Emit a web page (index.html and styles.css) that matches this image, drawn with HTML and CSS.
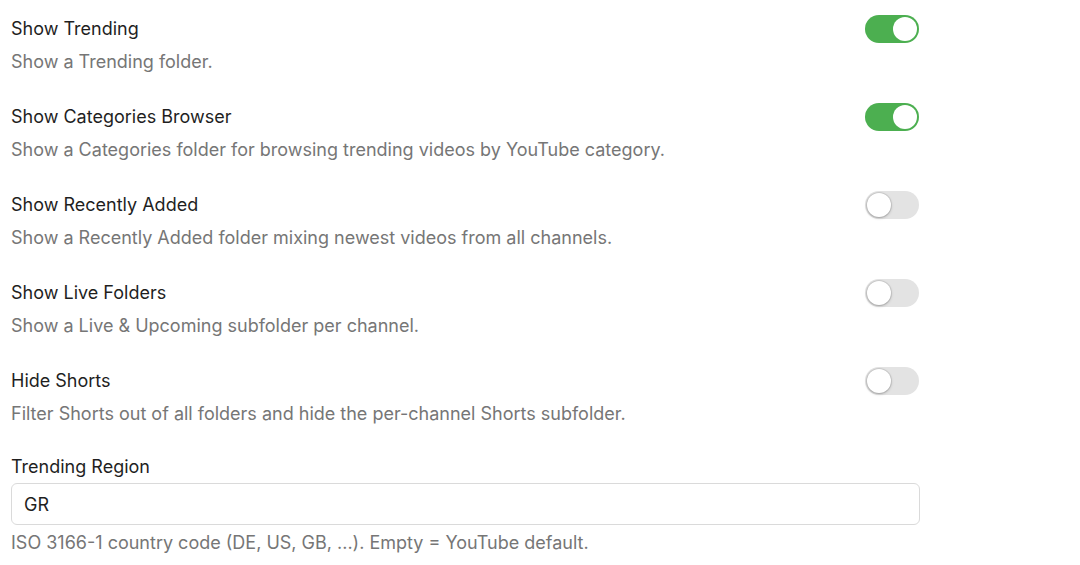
FILE: index.html
```html
<!DOCTYPE html>
<html lang="en">
<head>
  <meta charset="UTF-8" />
  <meta name="viewport" content="width=device-width, initial-scale=1" />
  <title>Settings</title>
  <link rel="stylesheet" href="styles.css">
</head>
<body>
  <div class="settings">
    <div class="setting">
      <div class="setting-head">
        <span class="setting-title">Show Trending</span>
        <label class="switch"><input type="checkbox" checked><span class="slider"></span></label>
      </div>
      <div class="setting-desc">Show a Trending folder.</div>
    </div>

    <div class="setting">
      <div class="setting-head">
        <span class="setting-title">Show Categories Browser</span>
        <label class="switch"><input type="checkbox" checked><span class="slider"></span></label>
      </div>
      <div class="setting-desc">Show a Categories folder for browsing trending videos by YouTube category.</div>
    </div>

    <div class="setting">
      <div class="setting-head">
        <span class="setting-title">Show Recently Added</span>
        <label class="switch"><input type="checkbox"><span class="slider"></span></label>
      </div>
      <div class="setting-desc">Show a Recently Added folder mixing newest videos from all channels.</div>
    </div>

    <div class="setting">
      <div class="setting-head">
        <span class="setting-title">Show Live Folders</span>
        <label class="switch"><input type="checkbox"><span class="slider"></span></label>
      </div>
      <div class="setting-desc">Show a Live &amp; Upcoming subfolder per channel.</div>
    </div>

    <div class="setting">
      <div class="setting-head">
        <span class="setting-title">Hide Shorts</span>
        <label class="switch"><input type="checkbox"><span class="slider"></span></label>
      </div>
      <div class="setting-desc">Filter Shorts out of all folders and hide the per-channel Shorts subfolder.</div>
    </div>

    <div class="field">
      <label class="field-label" for="region">Trending Region</label>
      <input class="text-input" type="text" id="region" value="GR" />
      <div class="setting-desc">ISO 3166-1 country code (DE, US, GB, ...). Empty = YouTube default.</div>
    </div>
  </div>
</body>
</html>
```

FILE: styles.css
```css
body {
  font-family: Inter, 'Noto Sans', sans-serif;
  background: #fff;
  color: #1f1f1f;
  margin: 0;
  padding: 0;
}
.settings {
  width: 909px;
  padding: 15px 0 0 11px;
}
.setting {
  margin-bottom: 29px;
}
.setting-head {
  display: flex;
  align-items: center;
  justify-content: space-between;
  height: 28px;
}
.setting-title,
.field-label {
  font-size: 18px;
  line-height: 24px;
  color: #1f1f1f;
}
.setting-desc {
  font-size: 18px;
  line-height: 24px;
  color: #767676;
  margin-top: 7px;
}
.switch {
  position: relative;
  display: inline-block;
  width: 54px;
  height: 28px;
  margin-right: 1px;
}
.switch input {
  display: none;
}
.slider {
  position: absolute;
  inset: 0;
  background: #e3e3e3;
  border-radius: 14px;
  cursor: pointer;
}
.slider::before {
  content: "";
  position: absolute;
  left: 2px;
  top: 2px;
  width: 24px;
  height: 24px;
  background: #fff;
  border-radius: 50%;
  box-shadow: 0 0 0 1px rgba(0, 0, 0, 0.08), 0 1px 3px rgba(0, 0, 0, 0.25);
}
.switch input:checked + .slider {
  background: #4caf50;
}
.switch input:checked + .slider::before {
  left: 28px;
  box-shadow: none;
}
.field-label {
  display: block;
}
.text-input {
  display: block;
  box-sizing: border-box;
  width: 909px;
  height: 42px;
  margin-top: 4px;
  padding: 0 12px;
  border: 1px solid #dadada;
  border-radius: 6px;
  font-family: inherit;
  font-size: 18px;
  color: #1f1f1f;
  outline: none;
}
.field .setting-desc {
  margin-top: 6px;
}
```
